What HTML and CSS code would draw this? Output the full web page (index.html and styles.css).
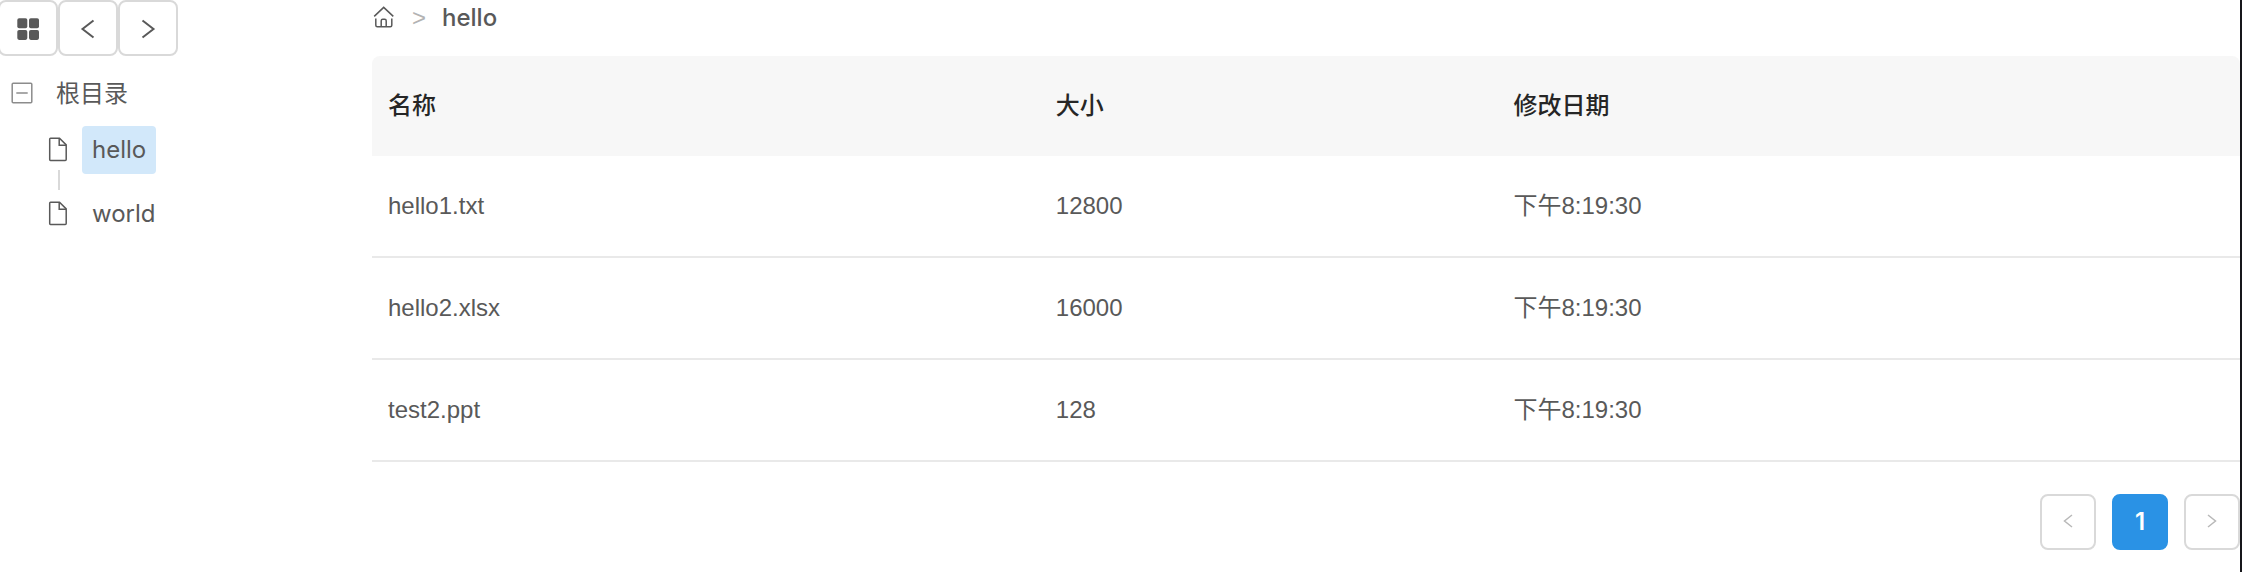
FILE: index.html
```html
<!DOCTYPE html>
<html lang="zh-CN">
<head>
<meta charset="utf-8">
<title>hello</title>
<link rel="stylesheet" href="styles.css">
</head>
<body>
<div class="explorer">
  <aside class="sidebar">
    <div class="toolbar">
      <button class="tool" type="button" aria-label="网格视图">
        <svg class="icon" viewBox="0 0 24 24"><rect x="1.300" y="2.200" width="10" height="10" rx="1.800"/><rect x="13" y="2.200" width="10" height="10" rx="1.800"/><rect x="1.300" y="13.900" width="10" height="10" rx="1.800"/><rect x="13" y="13.900" width="10" height="10" rx="1.800"/></svg>
      </button>
      <button class="tool" type="button" aria-label="后退">
        <svg class="icon" viewBox="0 0 24 24"><path d="M17.500 4.500L6.500 13L17.500 21.500"/></svg>
      </button>
      <button class="tool" type="button" aria-label="前进">
        <svg class="icon" viewBox="0 0 24 24"><path d="M6.500 4.500L17.500 13L6.500 21.500"/></svg>
      </button>
    </div>
    <div class="tree">
      <div class="node">
        <button class="toggle" type="button" aria-label="折叠">
          <svg class="icon" viewBox="0 0 24 24"><rect x="2.200" y="1.200" width="19.600" height="19.600" rx="1"/><path d="M6.300 11H17.700"/></svg>
        </button>
        <a class="label" href="#">根目录</a>
      </div>
      <ul class="children">
        <li class="node">
          <svg class="icon file" viewBox="0 0 24 24"><path d="M4.500 0.200H13.500L20.200 6.900V21.400Q20.200 22.400 19.200 22.400H4.500Q3.700 22.400 3.700 21.400V1.200Q3.700 0.200 4.500 0.200Z"/><path d="M13.200 0.800V7.200H20"/></svg>
          <a class="label selected" href="#">hello</a>
        </li>
        <li class="node">
          <svg class="icon file" viewBox="0 0 24 24"><path d="M4.500 0.200H13.500L20.200 6.900V21.400Q20.200 22.400 19.200 22.400H4.500Q3.700 22.400 3.700 21.400V1.200Q3.700 0.200 4.500 0.200Z"/><path d="M13.200 0.800V7.200H20"/></svg>
          <a class="label" href="#">world</a>
        </li>
      </ul>
    </div>
  </aside>
  <main class="content">
    <nav class="breadcrumb">
      <a class="home" href="#" aria-label="首页">
        <svg class="icon" viewBox="0 0 24 24"><path d="M2.200 10.400L11.700 1.400L21.300 10.400M3.800 12.400V19.300Q3.800 20.800 5.300 20.800H18.300Q19.800 20.800 19.800 19.300V12.400M9.200 20.500V14.800Q9.200 13.300 10.700 13.300H12.700Q14.200 13.300 14.200 14.800V20.500"/></svg>
      </a>
      <span class="separator">&gt;</span>
      <span class="current">hello</span>
    </nav>
    <table class="files">
      <thead>
        <tr><th class="name">名称</th><th class="size">大小</th><th>修改日期</th></tr>
      </thead>
      <tbody>
        <tr><td>hello1.txt</td><td>12800</td><td>下午8:19:30</td></tr>
        <tr><td>hello2.xlsx</td><td>16000</td><td>下午8:19:30</td></tr>
        <tr><td>test2.ppt</td><td>128</td><td>下午8:19:30</td></tr>
      </tbody>
    </table>
    <nav class="pagination">
      <button class="page" type="button" aria-label="上一页" disabled>
        <svg class="arrow" viewBox="0 0 16 16"><path d="M12 1L4.500 7L12 13"/></svg>
      </button>
      <button class="page active" type="button">1</button>
      <button class="page" type="button" aria-label="下一页" disabled>
        <svg class="arrow" viewBox="0 0 16 16"><path d="M4 1L11.500 7L4 13"/></svg>
      </button>
    </nav>
  </main>
</div>
</body>
</html>
```
FILE: styles.css
```css
* {
  box-sizing: border-box;
}

body {
  margin: 0;
  color: #595959;
  background: #fff;
  font: 24px/36px Inter, "Noto Sans CJK SC", sans-serif;
}

a {
  color: inherit;
  text-decoration: none;
}

button {
  padding: 0;
  color: inherit;
  font: inherit;
  background: #fff;
}

svg {
  display: block;
  flex: none;
  overflow: visible;
  fill: none;
  stroke: currentColor;
  stroke-width: 2;
}

.icon {
  width: 24px;
  height: 24px;
}

.explorer {
  display: flex;
  min-height: 100vh;
  border-right: 2px solid #17171b;
}

.sidebar {
  flex: none;
  width: 372px;
}

.toolbar {
  display: flex;
  margin-left: -2px;
}

.tool,
.page {
  display: flex;
  align-items: center;
  justify-content: center;
  height: 56px;
  border: 2px solid #d9d9d9;
  border-radius: 8px;
}

.tool {
  width: 60px;
}

.tool rect {
  stroke: none;
  fill: currentColor;
}

.tree {
  padding: 14px 10px;
}

.node {
  display: flex;
  align-items: center;
  gap: 12px;
  height: 48px;
}

.toggle {
  color: #8c8c8c;
  border: 0;
}

.toggle .icon,
.file,
.home .icon {
  stroke-width: 1.5;
}

.children {
  margin: 0;
  padding: 8px 0 0 36px;
  list-style: none;
}

.children .node + .node {
  position: relative;
  margin-top: 16px;
}

.children .node + .node::before {
  position: absolute;
  top: -20px;
  left: 12px;
  width: 2px;
  height: 20px;
  background: #d9d9d9;
  content: "";
}

.label {
  padding: 0 10px;
  border-radius: 4px;
  line-height: 48px;
}

.selected {
  background: #d2e8fa;
}

.content {
  flex: 1;
}

.breadcrumb {
  display: flex;
  align-items: center;
  gap: 16px;
  height: 36px;
  margin-bottom: 20px;
}

.separator {
  color: #b3b3b3;
  font-family: "Liberation Sans", sans-serif;
}

.current {
  font-weight: 500;
}

.files {
  width: 100%;
  border-spacing: 0;
  table-layout: fixed;
  font-family: "Liberation Sans", "Noto Sans CJK SC", sans-serif;
}

.files th,
.files td {
  padding: 32px 16px;
  text-align: left;
}

.files th {
  color: #262626;
  background: #f7f7f7;
  font-weight: 500;
}

.files th:first-child {
  border-top-left-radius: 8px;
}

.files th:last-child {
  border-top-right-radius: 8px;
}

.files td {
  border-bottom: 2px solid #e9e9e9;
}

.name {
  width: 35.75%;
}

.size {
  width: 24.5%;
}

.pagination {
  display: flex;
  justify-content: flex-end;
  gap: 16px;
  margin-top: 32px;
}

.page {
  width: 56px;
}

.page:disabled {
  color: #b8b8b8;
}

.active {
  color: #fff;
  background: #2a92e5;
  border-color: #2a92e5;
  font-weight: 600;
}

.arrow {
  width: 16px;
  height: 16px;
  stroke-width: 1.5;
}
```
